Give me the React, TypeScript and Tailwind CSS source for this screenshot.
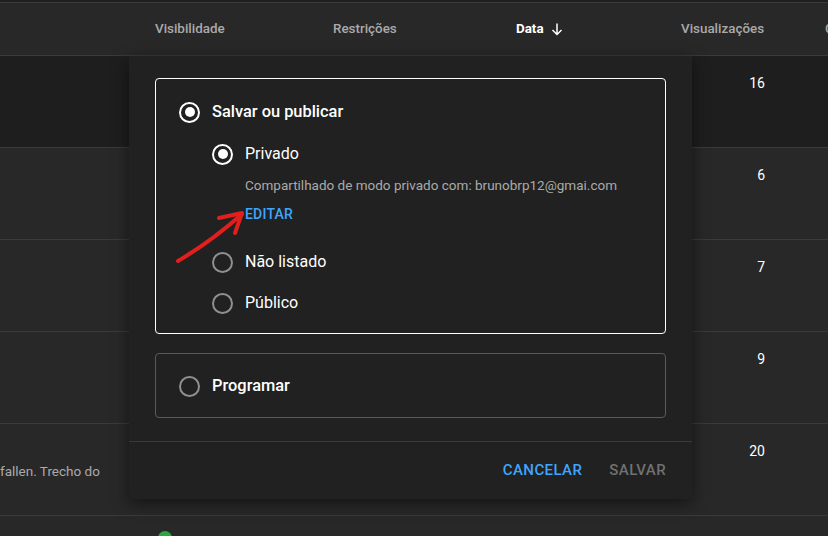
import React from "react";

function Radio({ checked }: { checked: boolean }) {
  return (
    <div
      className={
        checked
          ? "w-[21px] h-[21px] rounded-full border-2 border-white flex items-center justify-center shrink-0"
          : "w-[21px] h-[21px] rounded-full border-2 border-[#909090] shrink-0"
      }
    >
      {checked && <div className="w-[10px] h-[10px] rounded-full bg-white" />}
    </div>
  );
}

const rows = [
  { n: "16", dark: true, desc: "" },
  { n: "6", dark: false, desc: "" },
  { n: "7", dark: false, desc: "" },
  { n: "9", dark: false, desc: "" },
  { n: "20", dark: false, desc: "fallen. Trecho do" },
];

export default function App() {
  return (
    <div
      className="relative w-[828px] h-[536px] overflow-hidden bg-[#282828] text-white"
      style={{ fontFamily: "Roboto, 'Noto Sans', sans-serif" }}
    >
      {/* top line */}
      <div className="h-[3px] bg-[#1f1f1f] border-b border-[#3a3a3a]" />
      {/* header */}
      <div className="relative h-[53px] border-b border-[#3a3a3a] flex items-center text-[13.4px] font-medium text-[#aaaaaa] whitespace-nowrap">
        <div className="w-[155px] shrink-0" />
        <div className="w-[178px] shrink-0">Visibilidade</div>
        <div className="w-[183px] shrink-0">Restrições</div>
        <div className="w-[165px] shrink-0 flex items-center gap-[6px] text-white font-bold">
          Data
          <svg width="14" height="14" viewBox="0 0 14 14" fill="none" stroke="white" strokeWidth="1.5">
            <path d="M7 1.5v11M2.5 8l4.5 4.5L11.5 8" />
          </svg>
        </div>
        <div className="w-[144px] shrink-0">Visualizações</div>
        <div className="shrink-0">Comentários</div>
      </div>
      {/* rows */}
      {rows.map((r, i) => (
        <div
          key={i}
          className={
            (r.dark ? "bg-[#1e1e1e] " : "bg-[#282828] ") +
            "relative h-[92px] border-b border-[#3a3a3a] flex"
          }
        >
          <div className="flex-1 flex items-center text-[13.5px] text-[#aaaaaa] pt-[4px]">
            {r.desc}
          </div>
          <div className="w-[63px] pt-[17px] text-[14px] text-right">{r.n}</div>
          <div className="w-[63px]" />
        </div>
      ))}
      <div className="absolute left-[158px] top-[531px] w-[14px] h-[14px] rounded-full bg-[#2ba640]" />

      {/* dialog */}
      <div className="absolute left-[129px] top-[56px] w-[563px] h-[443px] bg-[#212121] rounded-b-[4px] shadow-[0_4px_16px_rgba(0,0,0,0.5)] flex flex-col">
        <div className="px-[26px] pt-[22px] flex flex-col gap-[19px]">
          <div className="h-[256px] border border-white rounded-[4px] pl-[23px] pt-[22px]">
            <div className="h-[22px] flex items-center gap-[12px]">
              <Radio checked />
              <span className="text-[16.4px] font-medium">Salvar ou publicar</span>
            </div>
            <div className="pl-[33px]">
              <div className="mt-[20px] h-[22px] flex items-center gap-[12px]">
                <Radio checked />
                <span className="text-[16px]">Privado</span>
              </div>
              <div className="pl-[33px] mt-[11px] text-[13.5px] text-[#aaaaaa] leading-[18px]">
                Compartilhado de modo privado com: brunobrp12@gmai.com
              </div>
              <div className="pl-[33px] mt-[10px] text-[14px] font-medium text-[#3ea6ff] leading-[20px] tracking-[0.2px]">
                EDITAR
              </div>
              <div className="mt-[27px] h-[22px] flex items-center gap-[12px]">
                <Radio checked={false} />
                <span className="text-[16px]">Não listado</span>
              </div>
              <div className="mt-[19px] h-[22px] flex items-center gap-[12px]">
                <Radio checked={false} />
                <span className="text-[16px]">Público</span>
              </div>
            </div>
          </div>
          <div className="h-[65px] border border-[#5a5a5a] rounded-[4px] pl-[23px] pt-[1px] flex items-center gap-[12px]">
            <Radio checked={false} />
            <span className="text-[16.4px] font-medium">Programar</span>
          </div>
        </div>
        <div className="mt-[23px] flex-1 border-t border-[#3a3a3a] flex items-center justify-end gap-[27px] pr-[26px] text-[15px] font-medium tracking-[0.4px]">
          <span className="text-[#3ea6ff]">CANCELAR</span>
          <span className="text-[#717171]">SALVAR</span>
        </div>
      </div>

      {/* red annotation arrow */}
      <svg className="absolute left-0 top-0 pointer-events-none" width="828" height="536">
        <path
          d="M178 261 C 200 248, 222 232, 242 214"
          stroke="#e21f1f"
          strokeWidth="4"
          fill="none"
          strokeLinecap="round"
        />
        <path
          d="M219 218 L242 213 L235 233"
          stroke="#e21f1f"
          strokeWidth="4"
          fill="none"
          strokeLinecap="round"
          strokeLinejoin="round"
        />
      </svg>
    </div>
  );
}
